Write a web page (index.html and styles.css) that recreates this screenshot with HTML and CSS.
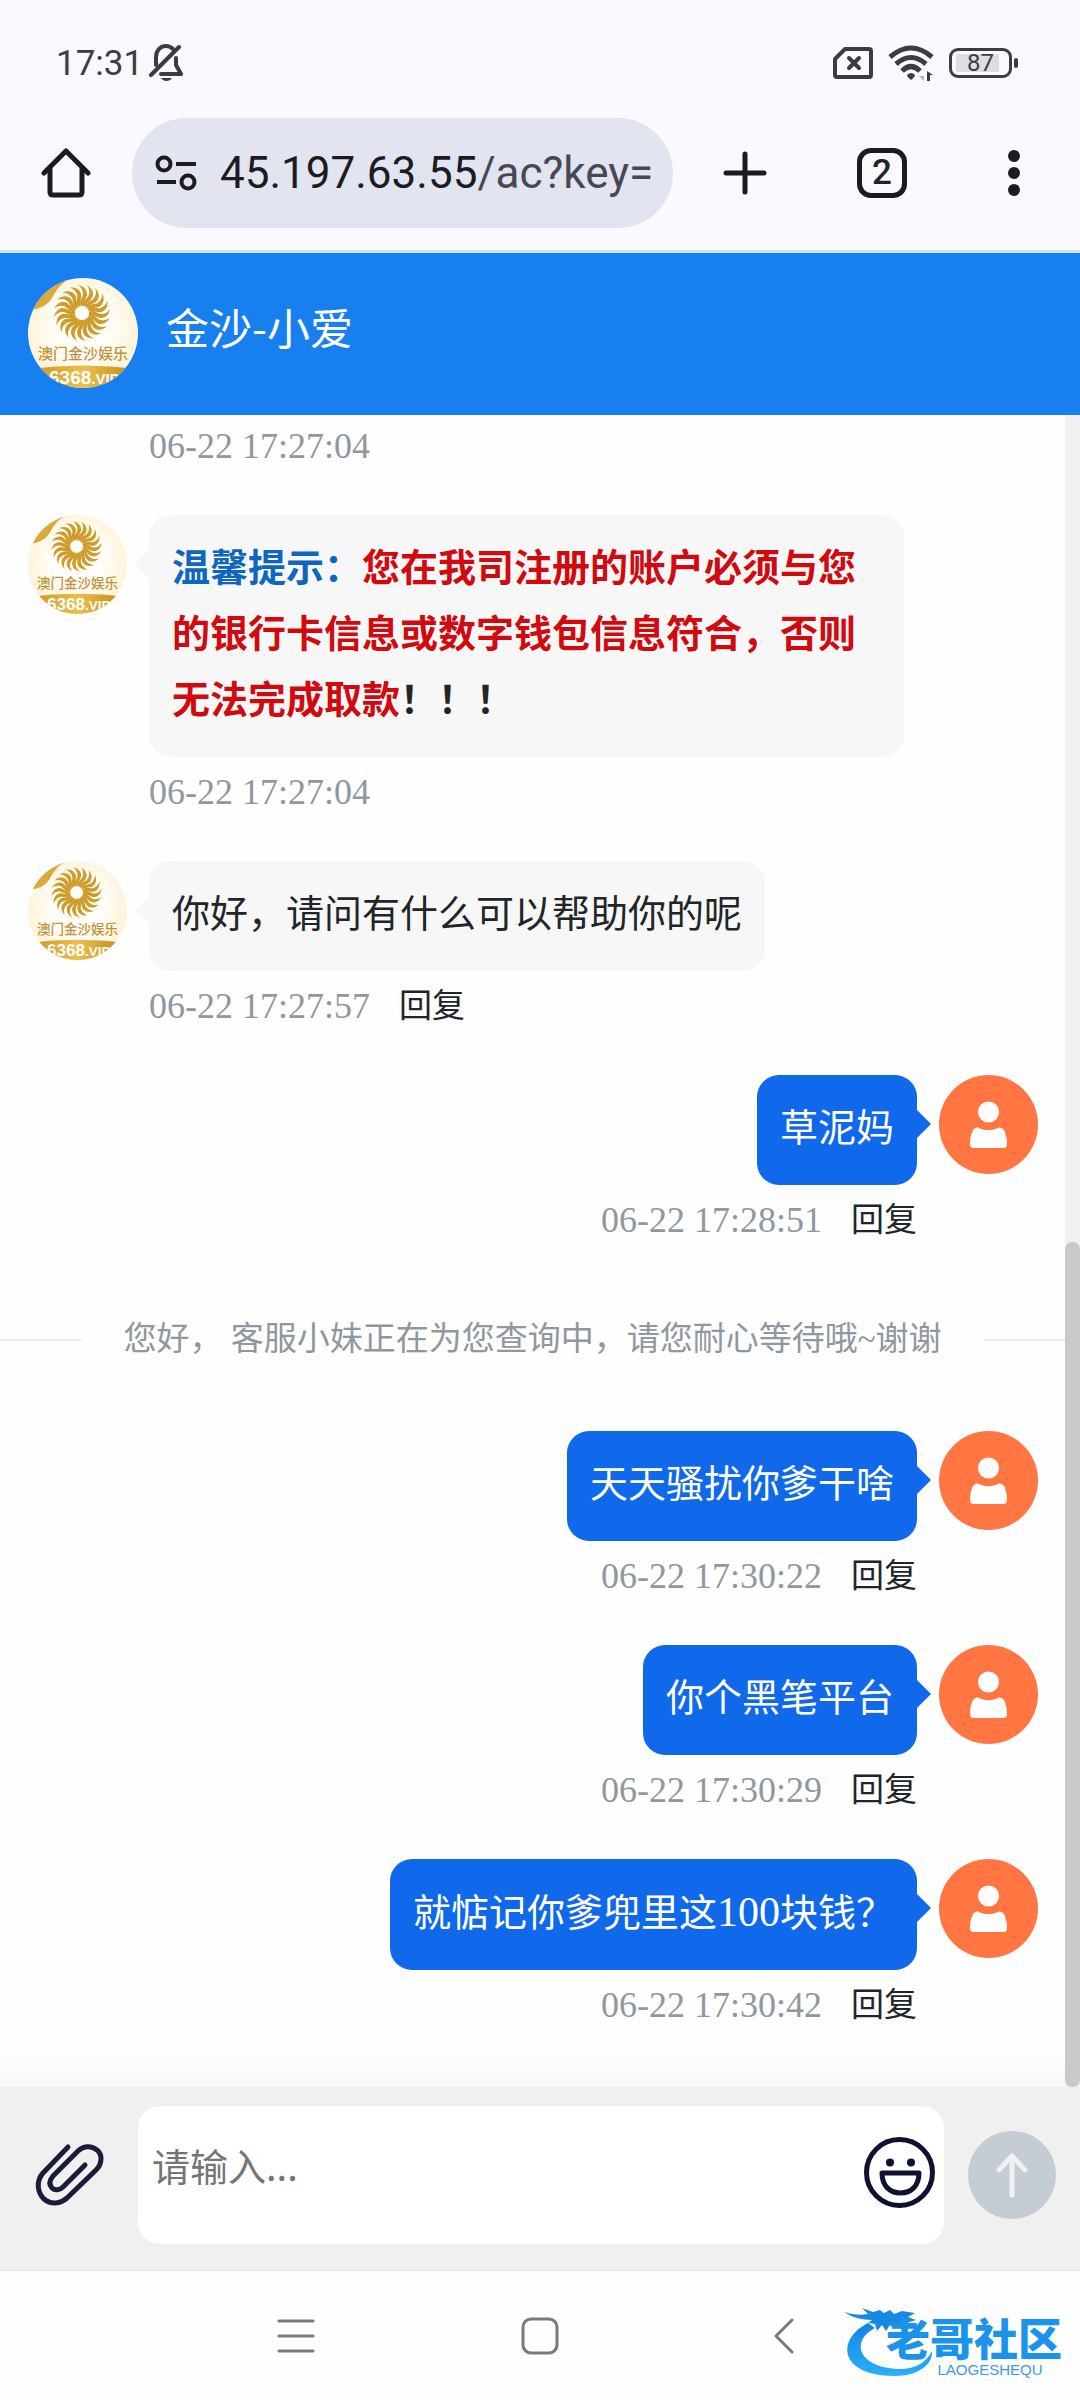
FILE: index.html
```html
<!DOCTYPE html>
<html lang="zh-CN">
<head>
<meta charset="utf-8">
<meta name="viewport" content="width=device-width, initial-scale=1">
<title>金沙-小爱</title>
<link rel="stylesheet" href="styles.css">
</head>
<body>
<svg class="defs" aria-hidden="true">
  <defs>
    <radialGradient id="cream" cx="50%" cy="45%" r="60%">
      <stop offset="0.4" stop-color="#fffefa"/>
      <stop offset="1" stop-color="#fdf0cf"/>
    </radialGradient>
    <linearGradient id="gold" x1="0" y1="0" x2="1" y2="0">
      <stop offset="0" stop-color="#c8921c"/>
      <stop offset="0.5" stop-color="#eac04c"/>
      <stop offset="1" stop-color="#bd8512"/>
    </linearGradient>
    <linearGradient id="azure" x1="0" y1="0" x2="0" y2="1">
      <stop offset="0" stop-color="#1284e2"/>
      <stop offset="1" stop-color="#2bb0fa"/>
    </linearGradient>
    <clipPath id="disc"><circle cx="55" cy="55" r="55"/></clipPath>
    <path id="ray" d="M-1-7C-4-12 1-15 1-19C1-23-1-26-4-28C1-27 5-24 5-19C5-15 1-12 1-7Z"/>
    <g id="rays5">
      <use href="#ray"/>
      <use href="#ray" transform="rotate(18)"/>
      <use href="#ray" transform="rotate(36)"/>
      <use href="#ray" transform="rotate(54)"/>
      <use href="#ray" transform="rotate(72)"/>
    </g>
    <symbol id="brand" viewBox="0 0 110 110">
      <g clip-path="url(#disc)">
        <rect width="110" height="110" fill="url(#cream)"/>
        <path d="M0 32C10 32 19 28 24 20C29 11 33 5 42 1L30-4L0 10Z" fill="#dba93c"/>
        <g transform="translate(54 35)" fill="#cf9c2c">
          <use href="#rays5"/>
          <use href="#rays5" transform="rotate(90)"/>
          <use href="#rays5" transform="rotate(180)"/>
          <use href="#rays5" transform="rotate(270)"/>
        </g>
        <text class="brand-name" x="55" y="81" text-anchor="middle">澳门金沙娱乐</text>
        <path d="M0 91Q55 84 110 91V110H0Z" fill="url(#gold)"/>
        <text class="brand-code" x="21" y="106">6368<tspan class="brand-vip">.VIP</tspan></text>
      </g>
    </symbol>
    <symbol id="person" viewBox="0 0 99 99">
      <circle cx="49.500" cy="49.500" r="49.500" fill="#ff7643"/>
      <circle cx="49.500" cy="37" r="10.500" fill="#fff"/>
      <path d="M39 52.500C46 56 53 56 60 52.500Q63 52 65 55Q68 61 68 69Q68 73 64 73H35Q31 73 31 69Q31 61 34 55Q36 52 39 52.500Z" fill="#fff"/>
    </symbol>
  </defs>
</svg>

<header class="browser">
  <div class="status">
    <span class="clock">17:31</span>
    <svg class="bell" viewBox="0 0 34 38" fill="none" stroke="#3c3c42" stroke-width="4" stroke-linecap="round">
      <path d="M2 31L30 3"/><path d="M7 21V13C7 6 12 2 17 2C20 2 22 3 24 5"/><path d="M27 14V21L32 30H12" stroke-linejoin="round"/><path d="M12 34H23Q21 37 17.500 37Q14 37 12 34Z" fill="#3c3c42" stroke="none"/>
    </svg>
    <div class="signals">
      <svg width="40" height="32" viewBox="0 0 40 32" fill="none" stroke="#3c3c42" stroke-width="4" stroke-linejoin="round">
        <path d="M2 12L12 2H36Q38 2 38 4V28Q38 30 36 30H4Q2 30 2 28Z"/><path d="M16 11L26 21M26 11L16 21" stroke-linecap="round"/>
      </svg>
      <svg width="46" height="36" viewBox="0 0 46 36" fill="none" stroke="#3c3c42" stroke-width="5">
        <path d="M2 12Q23-6 44 12"/><path d="M8 19Q23 6 38 19"/><path d="M14 26Q23 17 32 26"/><path d="M19 30Q23 26 27 30Q27 32 23 35Q19 32 19 30Z" fill="#3c3c42" stroke="none"/>
        <path d="M36 26V36L31 31H36" fill="#b5b5bb" stroke="none"/><path d="M39 36V26L45 30H42V36Z" fill="#3c3c42" stroke="none"/>
      </svg>
      <div class="battery"><span class="charge">87</span></div>
    </div>
  </div>
  <nav class="toolbar" aria-label="浏览器">
    <button class="tool home" aria-label="主页">
      <svg width="50" height="52" viewBox="0 0 50 52" fill="none" stroke="#1b1b20" stroke-width="5" stroke-linejoin="round" stroke-linecap="round"><path d="M3 26L25 4L47 26"/><path d="M9 22V45Q9 48 12 48H38Q41 48 41 45V22"/></svg>
    </button>
    <button class="address">
      <svg width="42" height="36" viewBox="0 0 42 36" fill="none" stroke="#1b1b20" stroke-width="4"><circle cx="9" cy="9" r="6.500"/><circle cx="33" cy="27" r="6.500"/><path d="M21 9H41M2 27H21"/></svg>
      <span class="url">45.197.63.55<span class="path">/ac?key=</span></span>
    </button>
    <button class="tool new-tab" aria-label="新标签页">
      <svg width="44" height="44" viewBox="0 0 44 44" stroke="#1b1b20" stroke-width="5" stroke-linecap="round"><path d="M22 3V41M3 22H41"/></svg>
    </button>
    <button class="tool tabs" aria-label="标签页"><span class="tab-count">2</span></button>
    <button class="tool more" aria-label="更多">
      <svg width="12" height="46" viewBox="0 0 12 46" fill="#1b1b20"><circle cx="6" cy="6" r="6"/><circle cx="6" cy="23" r="6"/><circle cx="6" cy="40" r="6"/></svg>
    </button>
  </nav>
</header>

<div class="chat-head">
  <svg class="head-avatar"><use href="#brand"/></svg>
  <h1 class="title">金沙-小爱</h1>
</div>

<main class="chat">
  <div class="log">
    <div class="message agent tail">
      <div class="meta"><time>06-22 17:27:04</time></div>
    </div>
    <div class="message agent">
      <svg class="avatar"><use href="#brand"/></svg>
      <div class="content">
        <p class="bubble notice"><span class="tip">温馨提示：</span><span class="warn">您在我司注册的账户必须与您的银行卡信息或数字钱包信息符合，否则无法完成取款</span>！！！</p>
        <div class="meta"><time>06-22 17:27:04</time></div>
      </div>
    </div>
    <div class="message agent">
      <svg class="avatar"><use href="#brand"/></svg>
      <div class="content">
        <p class="bubble">你好，请问有什么可以帮助你的呢</p>
        <div class="meta"><time>06-22 17:27:57</time><button class="reply">回复</button></div>
      </div>
    </div>
    <div class="message visitor">
      <svg class="avatar"><use href="#person"/></svg>
      <div class="content">
        <p class="bubble">草泥妈</p>
        <div class="meta"><time>06-22 17:28:51</time><button class="reply">回复</button></div>
      </div>
    </div>
    <div class="divider"><span class="divider-text">您好， 客服小妹正在为您查询中，请您耐心等待哦~谢谢</span></div>
    <div class="message visitor">
      <svg class="avatar"><use href="#person"/></svg>
      <div class="content">
        <p class="bubble">天天骚扰你爹干啥</p>
        <div class="meta"><time>06-22 17:30:22</time><button class="reply">回复</button></div>
      </div>
    </div>
    <div class="message visitor">
      <svg class="avatar"><use href="#person"/></svg>
      <div class="content">
        <p class="bubble">你个黑笔平台</p>
        <div class="meta"><time>06-22 17:30:29</time><button class="reply">回复</button></div>
      </div>
    </div>
    <div class="message visitor">
      <svg class="avatar"><use href="#person"/></svg>
      <div class="content">
        <p class="bubble">就惦记你爹兜里这<span class="amount">100</span>块钱？</p>
        <div class="meta"><time>06-22 17:30:42</time><button class="reply">回复</button></div>
      </div>
    </div>
  </div>
  <div class="track"><div class="thumb"></div></div>
</main>

<form class="composer">
  <button class="attach" type="button" aria-label="附件">
    <svg width="70" height="64" viewBox="0 0 70 64" fill="none" stroke="#1a1c3a" stroke-width="5" stroke-linecap="round" stroke-linejoin="round"><path d="M34 4L9 30C2 38 3 49 10 56C17 62 26 61 33 55L62 27C69 20 68 11 63 7C57 2 49 3 44 8L19 33C15 38 15 42 18 45C21 48 26 47 29 44L51 22"/></svg>
  </button>
  <div class="field">
    <textarea class="entry" rows="1" placeholder="请输入..." aria-label="请输入"></textarea>
    <button class="emoji" type="button" aria-label="表情">
      <svg width="71" height="71" viewBox="0 0 71 71" fill="none" stroke="#0f1130" stroke-width="5" stroke-linejoin="round"><circle cx="35.500" cy="35.500" r="33"/><path d="M18 36H55C55 49 47 56 36.500 56C26 56 18 49 18 36Z"/><circle cx="26" cy="25.500" r="4" fill="#0f1130" stroke="none"/><circle cx="47" cy="25.500" r="4" fill="#0f1130" stroke="none"/></svg>
    </button>
  </div>
  <button class="send" type="button" aria-label="发送">
    <svg width="34" height="46" viewBox="0 0 34 46" fill="none" stroke="#eff1f3" stroke-width="5" stroke-linecap="round" stroke-linejoin="round"><path d="M17 43V4M4 18L17 4L30 18"/></svg>
  </button>
</form>

<footer class="system">
  <button class="key recents" aria-label="最近任务">
    <svg width="38" height="36" viewBox="0 0 38 36" stroke="#7a7a7a" stroke-width="3" stroke-linecap="round"><path d="M2 3H36M2 18H36M2 33H36"/></svg>
  </button>
  <button class="key" aria-label="桌面">
    <svg width="38" height="38" viewBox="0 0 38 38" fill="none" stroke="#7a7a7a" stroke-width="3"><rect x="2" y="2" width="34" height="34" rx="8"/></svg>
  </button>
  <button class="key back" aria-label="返回">
    <svg width="20" height="36" viewBox="0 0 20 36" fill="none" stroke="#7a7a7a" stroke-width="3" stroke-linecap="round" stroke-linejoin="round"><path d="M18 2L2 18L18 34"/></svg>
  </button>
  <div class="watermark">
    <svg class="dragon" viewBox="0 0 94 76">
      <path d="M26 20C-6 36-4 73 53 73C76 73 91 62 90 48C84 60 72 67 55 66C16 64 8 38 33 25Z" fill="url(#azure)"/>
      <path d="M2 9Q14 13 26 11L20 5L31 9L38 7L42 10L48 7L52 11L60 8L73 10L66 14L74 17L64 20L73 23L58 22L52 26L48 22L44 28L40 22L35 28L33 21L26 20L30 17Q14 17 2 9Z" fill="#1689e4"/>
    </svg>
    <div class="words"><span class="site">老哥社区</span><span class="latin">LAOGESHEQU</span></div>
  </div>
</footer>
</body>
</html>
```

FILE: styles.css
```css
* { box-sizing: border-box; }

body {
  margin: 0;
  min-height: 100vh;
  display: flex;
  flex-direction: column;
  background: #fefefe;
  color: #212529;
  font-family: "Liberation Serif", "Noto Sans CJK SC", serif;
  font-size: 38px;
}

svg { display: block; flex: none; }

button {
  margin: 0;
  padding: 0;
  border: 0;
  background: none;
  color: inherit;
  font: inherit;
}

.defs { position: absolute; width: 0; height: 0; }

.brand-name { font: 500 15px "Noto Sans CJK SC", sans-serif; fill: #c0933a; }
.brand-code { font: bold 19px "Liberation Sans", sans-serif; fill: #fff; }
.brand-vip { font-size: 15px; }

/* Phone status bar and browser toolbar */
.browser {
  background: #f9f9ff;
  border-bottom: 3px solid #d0e6f4;
  font-family: Roboto, sans-serif;
}

.status {
  height: 118px;
  padding: 8px 62px 0 56px;
  display: flex;
  align-items: center;
  gap: 6px;
}

.clock { font-size: 35px; color: #3c3c42; }
.bell { width: 34px; height: 38px; }

.signals {
  margin-left: auto;
  display: flex;
  align-items: center;
  gap: 15px;
}

.battery { display: flex; align-items: center; gap: 2px; }

.battery::after {
  content: "";
  width: 4px;
  height: 10px;
  border-radius: 2px;
  background: #3c3c42;
}

.charge {
  width: 63px;
  height: 30px;
  border: 3px solid #3c3c42;
  border-radius: 9px;
  background: linear-gradient(#dddde2, #dddde2) 4px center / 43px 18px no-repeat;
  color: #3c3c42;
  font-size: 24px;
  line-height: 24px;
  text-align: center;
}

.toolbar { display: flex; padding-bottom: 22px; }

.tool { display: flex; align-items: center; justify-content: center; }
.home { width: 132px; }
.new-tab { width: 144px; }
.tabs { width: 130px; }
.more { width: 133px; }

.address {
  flex: 1;
  min-width: 0;
  height: 110px;
  padding: 0 16px 0 23px;
  display: flex;
  align-items: center;
  gap: 23px;
  overflow: hidden;
  border-radius: 55px;
  background: #e2e4f0;
  color: #1b1b21;
  font-size: 44px;
  white-space: nowrap;
}

.path { color: #474853; }

.tab-count {
  width: 50px;
  height: 50px;
  border: 5px solid #1b1b20;
  border-radius: 14px;
  font-size: 35px;
  font-weight: 500;
  line-height: 40px;
  text-align: center;
}

/* Chat heading */
.chat-head {
  display: flex;
  align-items: center;
  gap: 28px;
  padding: 25px 28px 27px;
  background: #187ff0;
  color: #fff;
}

.head-avatar { width: 110px; height: 110px; }

.title {
  margin: 0;
  font: 400 43px/64px "Noto Sans CJK SC", sans-serif;
  padding-bottom: 14px;
}

/* Conversation */
.chat { flex: 1; display: flex; }

.log {
  flex: 1;
  min-width: 0;
  padding: 7px 0 0;
  display: flex;
  flex-direction: column;
  gap: 44px;
  background: linear-gradient(#fefefe00, #f7f7f7) bottom / 100% 36px no-repeat;
}

.message { display: flex; gap: 22px; padding: 0 27px 0 28px; }
.visitor { flex-direction: row-reverse; }
.tail { padding-left: 149px; }
.tail .meta { margin-top: 0; padding-bottom: 1px; }

.avatar { width: 99px; height: 99px; }

.content {
  display: flex;
  flex-direction: column;
  align-items: flex-start;
  max-width: 755px;
}

.visitor .content { align-items: flex-end; }

.bubble {
  position: relative;
  margin: 0;
  padding: 20px 23px 24px;
  border-radius: 22px;
  background: #f7f7f7;
  line-height: 66px;
}

.bubble::before {
  content: "";
  position: absolute;
  top: 35px;
  left: -14px;
  border: 14px solid transparent;
  border-left-width: 0;
  border-right-color: #f7f7f7;
}

.visitor .bubble { background: #0f69ea; color: #fff; }

.visitor .bubble::before {
  left: auto;
  right: -14px;
  border-width: 14px 0 14px 14px;
  border-color: transparent transparent transparent #0f69ea;
}

.notice { font-weight: bold; }
.tip { color: #0e66c0; }
.warn { color: #d00a0e; }
.amount { font-size: 42px; }

.meta {
  margin-top: 11px;
  padding-bottom: 1px;
  display: flex;
  gap: 29px;
  color: #8f979f;
  font-size: 36px;
  line-height: 48px;
}

.reply { color: #212529; font-size: 33px; }

.divider {
  height: 98px;
  display: flex;
  align-items: center;
  gap: 42px;
  padding-top: 4px;
  color: #8f979f;
  font-size: 33px;
  white-space: nowrap;
}

.divider-text { padding-bottom: 8px; }

.divider::before,
.divider::after {
  content: "";
  flex: 1;
  height: 2px;
  background: #e8eaeb;
}

.track {
  width: 15px;
  display: flex;
  flex-direction: column;
  background: #f1f1f1;
}

.track::before { content: ""; flex: 827; }
.thumb { flex: 845; border-radius: 7px; background: #c9c9c9; }

/* Message entry */
.composer {
  display: flex;
  align-items: center;
  padding: 19px 24px 26px 0;
  background: #f0f0f0;
}

.attach { width: 138px; display: flex; justify-content: center; }

.field {
  flex: 1;
  min-width: 0;
  height: 138px;
  padding: 31px 9px 0 14px;
  display: flex;
  align-items: flex-start;
  border-radius: 22px;
  background: #fff;
}

.entry {
  flex: 1;
  min-width: 0;
  height: 56px;
  padding: 0;
  border: 0;
  outline: 0;
  resize: none;
  overflow: hidden;
  background: transparent;
  font: 38px/56px "Noto Sans CJK SC", sans-serif;
}

.entry::placeholder { color: #757575; }

.send {
  width: 88px;
  height: 88px;
  margin-left: 24px;
  display: flex;
  align-items: center;
  justify-content: center;
  border-radius: 50%;
  background: #c6ccd4;
}

/* System navigation */
.system {
  position: relative;
  height: 130px;
  display: grid;
  grid-template-columns: 1fr 38px 1fr;
  align-items: center;
  border-top: 1px solid #e4e4e4;
  background: #fefefe;
}

.key { display: flex; justify-content: center; }
.recents { justify-content: flex-end; padding-right: 206px; }
.back { justify-content: flex-start; padding-left: 215px; }

.watermark {
  position: absolute;
  right: 18px;
  top: 32px;
  display: flex;
}

.dragon { width: 94px; height: 76px; }

.words {
  margin: 9px 0 0 -50px;
  display: flex;
  flex-direction: column;
  align-items: center;
}

.site {
  color: #1c93ea;
  font: 900 44px/50px "Noto Sans CJK SC", sans-serif;
}

.latin {
  padding-left: 32px;
  color: #3d9be0;
  font: 15px/16px "Liberation Sans", sans-serif;
}
```
